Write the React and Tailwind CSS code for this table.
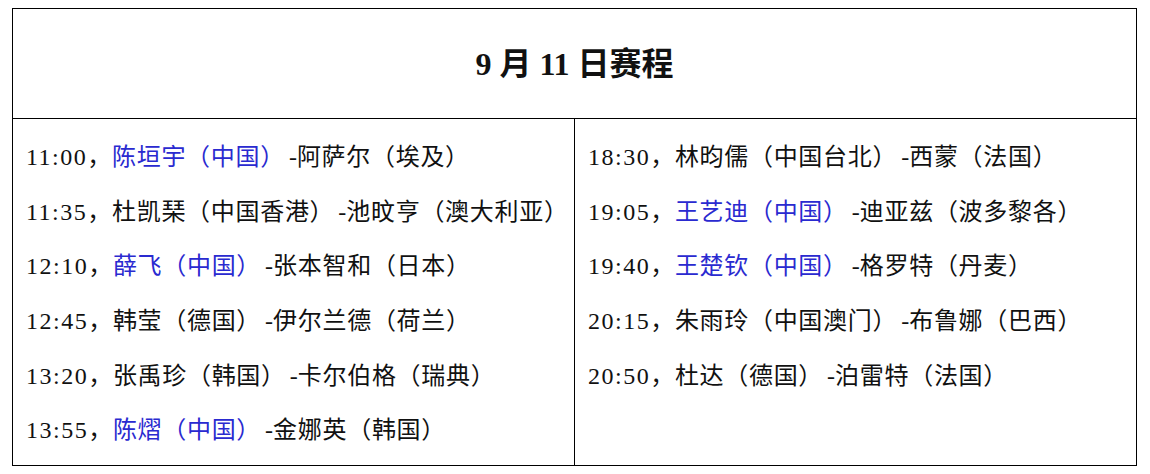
const left = [
  { time: "11:00", a: "陈垣宇（中国）", hi: true, b: "阿萨尔（埃及）" },
  { time: "11:35", a: "杜凯琹（中国香港）", b: "池旼亨（澳大利亚）" },
  { time: "12:10", a: "薛飞（中国）", hi: true, b: "张本智和（日本）" },
  { time: "12:45", a: "韩莹（德国）", b: "伊尔兰德（荷兰）" },
  { time: "13:20", a: "张禹珍（韩国）", b: "卡尔伯格（瑞典）" },
  { time: "13:55", a: "陈熠（中国）", hi: true, b: "金娜英（韩国）" },
];

const right = [
  { time: "18:30", a: "林昀儒（中国台北）", b: "西蒙（法国）" },
  { time: "19:05", a: "王艺迪（中国）", hi: true, b: "迪亚兹（波多黎各）" },
  { time: "19:40", a: "王楚钦（中国）", hi: true, b: "格罗特（丹麦）" },
  { time: "20:15", a: "朱雨玲（中国澳门）", b: "布鲁娜（巴西）" },
  { time: "20:50", a: "杜达（德国）", b: "泊雷特（法国）" },
];

const Row = ({ item }) => (
  <div className="h-[54.6px] flex items-center whitespace-nowrap tracking-[0.7px]">
    <span className="tracking-[1.5px]">{item.time}</span>
    <span>，</span>
    <span className={item.hi ? "text-[#2a2ad0]" : ""}>{item.a}</span>
    <span className="inline-block w-[12px] text-right tracking-normal">-</span>
    <span>{item.b}</span>
  </div>
);

export default function App() {
  return (
    <div className="bg-white w-[1150px] h-[474px] pt-2 pl-3 text-[#111] font-['Liberation_Serif','Noto_Sans_CJK_SC',serif]">
      <div className="w-[1125px] h-[458px] border border-black flex flex-col">
        {/* Title */}
        <div className="h-[110px] shrink-0 border-b border-black flex items-center justify-center">
          <h1 className="text-[32px] font-bold">9 月 11 日赛程</h1>
        </div>

        {/* Schedule */}
        <div className="flex-1 grid grid-cols-[562px_1fr] text-[24px]">
          <div className="border-r border-black pl-[13px] pt-[11px]">
            {left.map((item) => (
              <Row key={item.time} item={item} />
            ))}
          </div>
          <div className="pl-[13px] pt-[11px]">
            {right.map((item) => (
              <Row key={item.time} item={item} />
            ))}
          </div>
        </div>
      </div>
    </div>
  );
}
